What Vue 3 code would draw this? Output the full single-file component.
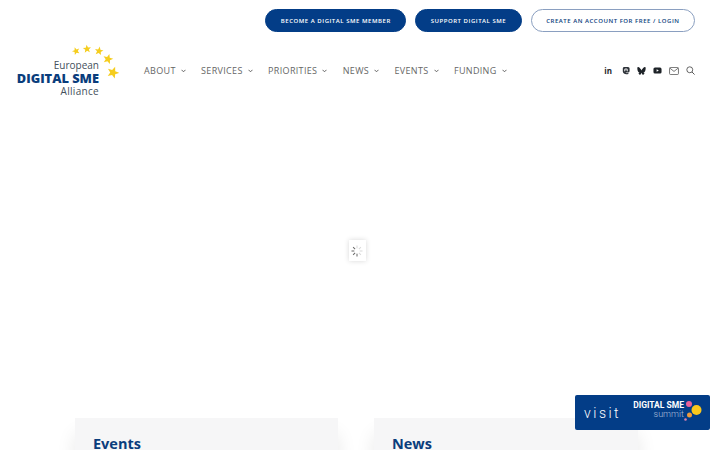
<script setup>
const buttons = [
  { label: 'Become a Digital SME member', solid: true },
  { label: 'Support Digital SME', solid: true },
  { label: 'Create an account for free / login', solid: false },
];
const menu = ['About', 'Services', 'Priorities', 'News', 'Events', 'Funding'];
const cards = ['Events', 'News'];
const star = 'M0 -5 L1.3 -1.6 L4.8 -1.5 L2.1 0.7 L3 4.1 L0 2.2 L-3 4.1 L-2.1 0.7 L-4.8 -1.5 L-1.3 -1.6 Z';
const stars = [
  { x: 7, y: 16, s: 0.8, r: -20 },
  { x: 18, y: 14, s: 0.85, r: -5 },
  { x: 30, y: 16, s: 0.9, r: 10 },
  { x: 39, y: 24, s: 1.05, r: 15 },
  { x: 44, y: 37.5, s: 1.25, r: 20 },
];
const spokes = [0, 45, 90, 135, 180, 225, 270, 315];
</script>

<template>
  <div class="page">
    <div class="top-bar">
      <a
        v-for="b in buttons"
        :key="b.label"
        class="btn"
        :class="{ solid: b.solid }"
        href="#"
      >{{ b.label }}</a>
    </div>

    <header class="main-nav">
      <a class="logo" href="#">
        <svg class="logo-stars" width="50" height="45" viewBox="0 0 50 45">
          <path
            v-for="(st, i) in stars"
            :key="i"
            :d="star"
            fill="#f5cd1e"
            :transform="`translate(${st.x} ${st.y}) rotate(${st.r}) scale(${st.s})`"
          />
        </svg>
        <span class="logo-thin">European</span>
        <span class="logo-bold">DIGITAL SME</span>
        <span class="logo-thin wide">Alliance</span>
      </a>

      <nav class="menu">
        <a v-for="m in menu" :key="m" class="menu-item" href="#">
          {{ m }}
          <svg width="5" height="4" viewBox="0 0 5 4"><path d="M0.5 0.8 L2.5 2.8 L4.5 0.8" fill="none" stroke="#555" stroke-width="0.9" /></svg>
        </a>
      </nav>

      <div class="socials">
        <span class="linkedin">in</span>
        <svg width="8" height="9" viewBox="0 0 10 10"><path d="M2.5 .5h5a2 2 0 0 1 2 2v3a2 2 0 0 1-2 2H4.5c0 .8 1.5 1 3.5.6v1.2c-3.500.8-6.500.2-7-3V2.500a2 2 0 0 1 1.500-2z" fill="#2d3238" /><path d="M3.2 6V3.8c0-1.4 1.8-1.4 1.8 0V5M5 5V3.8c0-1.4 1.8-1.4 1.8 0V6" fill="none" stroke="#fff" stroke-width="0.9" /></svg>
        <svg width="9" height="8" viewBox="0 0 10 9"><path d="M5 3.9C4.5 2.9 3.2 1.1 2 .4 .9-.2.3 0 .3 1.3c0 .8.4 3 .7 3.5.4.9 1.4 1.1 2.3 1-1.3.2-2.4.7-1 2.3 1.6 1.6 2.2-.4 2.7-1.5.5 1.1 1 3.1 2.7 1.5 1.4-1.6.3-2.1-1-2.3.9.1 1.9-.1 2.3-1 .3-.5.7-2.7.7-3.5C9.7 0 9.1-.2 8 .4 6.8 1.1 5.5 2.9 5 3.9z" fill="#1e2328" /></svg>
        <svg width="9" height="7" viewBox="0 0 11 9"><rect x="0.3" y="0.5" width="10.4" height="8" rx="2" fill="#1e2328" /><path d="M4.4 2.8 L7.2 4.5 L4.4 6.2 Z" fill="#fff" /></svg>
        <svg width="10" height="8" viewBox="0 0 11 9"><rect x="0.5" y="0.5" width="10" height="8" rx="1.2" fill="none" stroke="#555" stroke-width="0.9" /><path d="M0.8 1.2 L5.5 5 L10.2 1.2" fill="none" stroke="#555" stroke-width="0.9" /></svg>
        <svg width="9" height="9" viewBox="0 0 10 10"><circle cx="4.2" cy="4.2" r="3.3" fill="none" stroke="#444" stroke-width="0.9" /><path d="M6.7 6.7 L9.5 9.5" stroke="#444" stroke-width="1" /></svg>
      </div>
    </header>

    <section class="hero">
      <div class="loader">
        <svg width="12" height="12" viewBox="-6 -6 12 12">
          <rect
            v-for="(deg, i) in spokes"
            :key="deg"
            x="-0.5"
            y="-5.5"
            width="1"
            height="2.8"
            :fill="i < 4 ? '#d8d8d8' : '#666'"
            :transform="`rotate(${deg})`"
          />
        </svg>
      </div>
    </section>

    <section class="cards">
      <article v-for="c in cards" :key="c" class="card">
        <h2>{{ c }}</h2>
      </article>
    </section>

    <a class="visit" href="#">
      <span class="visit-word">visit</span>
      <span class="summit">
        <span class="summit-name">DIGITAL SME</span>
        <span class="summit-sub">summit</span>
      </span>
      <svg class="summit-dots" width="20" height="22" viewBox="0 0 20 22">
        <circle cx="5" cy="4" r="3" fill="#e8609a" />
        <circle cx="12.5" cy="10" r="5" fill="#fbc81c" />
        <circle cx="5.5" cy="15" r="2.5" fill="#f09a3c" />
        <circle cx="1.5" cy="19.5" r="1.3" fill="#d880b0" />
      </svg>
    </a>
  </div>
</template>

<style scoped>
.page {
  position: relative;
  width: 720px;
  height: 450px;
  overflow: hidden;
  background: #fff;
  font-family: 'Open Sans', sans-serif;
}

.top-bar {
  display: flex;
  justify-content: flex-end;
  gap: 9px;
  padding: 9px 25px 0 0;
}

.btn {
  display: flex;
  align-items: center;
  height: 23px;
  box-sizing: border-box;
  padding: 0 14.5px;
  border: 1px solid #8a9fc0;
  border-radius: 12px;
  color: #0a3d7c;
  font-size: 6px;
  font-weight: 600;
  letter-spacing: 0.53px;
  text-transform: uppercase;
  text-decoration: none;
  white-space: nowrap;
}

.btn.solid {
  background: #033d87;
  border-color: #033d87;
  color: #fff;
}

.main-nav {
  display: flex;
  align-items: center;
  height: 57px;
  margin-top: 10px;
  padding: 0 25px 0 17px;
}

.logo {
  position: relative;
  display: flex;
  flex-direction: column;
  align-items: flex-end;
  width: 82px;
  margin-top: 15px;
  text-decoration: none;
}

.logo-stars {
  position: absolute;
  left: 52px;
  top: -24px;
}

.logo-thin {
  color: #44505c;
  font-size: 10px;
  line-height: 13px;
}

.logo-thin.wide {
  letter-spacing: 0.3px;
}

.logo-bold {
  color: #0a3d7c;
  font-size: 12.8px;
  font-weight: 800;
  line-height: 13px;
  white-space: nowrap;
}

.menu {
  display: flex;
  gap: 15.4px;
  margin-left: 45px;
}

.menu-item {
  display: flex;
  align-items: center;
  gap: 5px;
  color: #666;
  font-size: 9px;
  letter-spacing: 0.33px;
  text-transform: uppercase;
  text-decoration: none;
}

.socials {
  display: flex;
  align-items: center;
  gap: 7px;
  margin-left: auto;
}

.linkedin {
  margin-right: 3px;
  color: #1e2328;
  font-size: 8px;
  font-weight: 700;
  line-height: 10px;
}

.hero {
  display: flex;
  align-items: center;
  justify-content: center;
  height: 319px;
  padding-right: 6px;
  box-sizing: border-box;
}

.loader {
  display: flex;
  align-items: center;
  justify-content: center;
  width: 17px;
  height: 21px;
  margin-bottom: 16px;
  background: #fff;
  box-shadow: 0 0 5px rgba(0, 0, 0, 0.16);
}

.cards {
  display: grid;
  grid-template-columns: 263px 264px;
  gap: 36px;
  padding: 0 0 0 75px;
}

.card {
  height: 120px;
  padding: 17px 18px 0;
  box-sizing: border-box;
  background: #f6f6f7;
  box-shadow: 0 16px 18px rgba(0, 0, 0, 0.09);
}

.card h2 {
  margin: 0;
  color: #0a3d7c;
  font-size: 14.5px;
  font-weight: 700;
  line-height: 18px;
}

.visit {
  position: absolute;
  left: 575px;
  top: 395px;
  display: flex;
  align-items: center;
  width: 135px;
  height: 35px;
  background: #033d87;
  border-radius: 2px;
  color: #fff;
  text-decoration: none;
}

.visit-word {
  margin-left: 9px;
  font-family: 'Roboto', sans-serif;
  font-size: 14px;
  font-weight: 300;
  letter-spacing: 2.5px;
}

.summit {
  display: flex;
  flex-direction: column;
  align-items: flex-end;
  margin: 0 0 6px 12px;
  font-family: 'Roboto', sans-serif;
}

.summit-name {
  font-size: 8.5px;
  font-weight: 700;
  line-height: 10px;
  white-space: nowrap;
}

.summit-sub {
  color: #a9bddb;
  font-size: 9px;
  font-weight: 300;
  line-height: 9px;
}

.summit-dots {
  position: absolute;
  left: 109px;
  top: 5px;
}
</style>

<style>
html,
body {
  margin: 0;
  overflow: hidden;
  background: #fff;
}
</style>
